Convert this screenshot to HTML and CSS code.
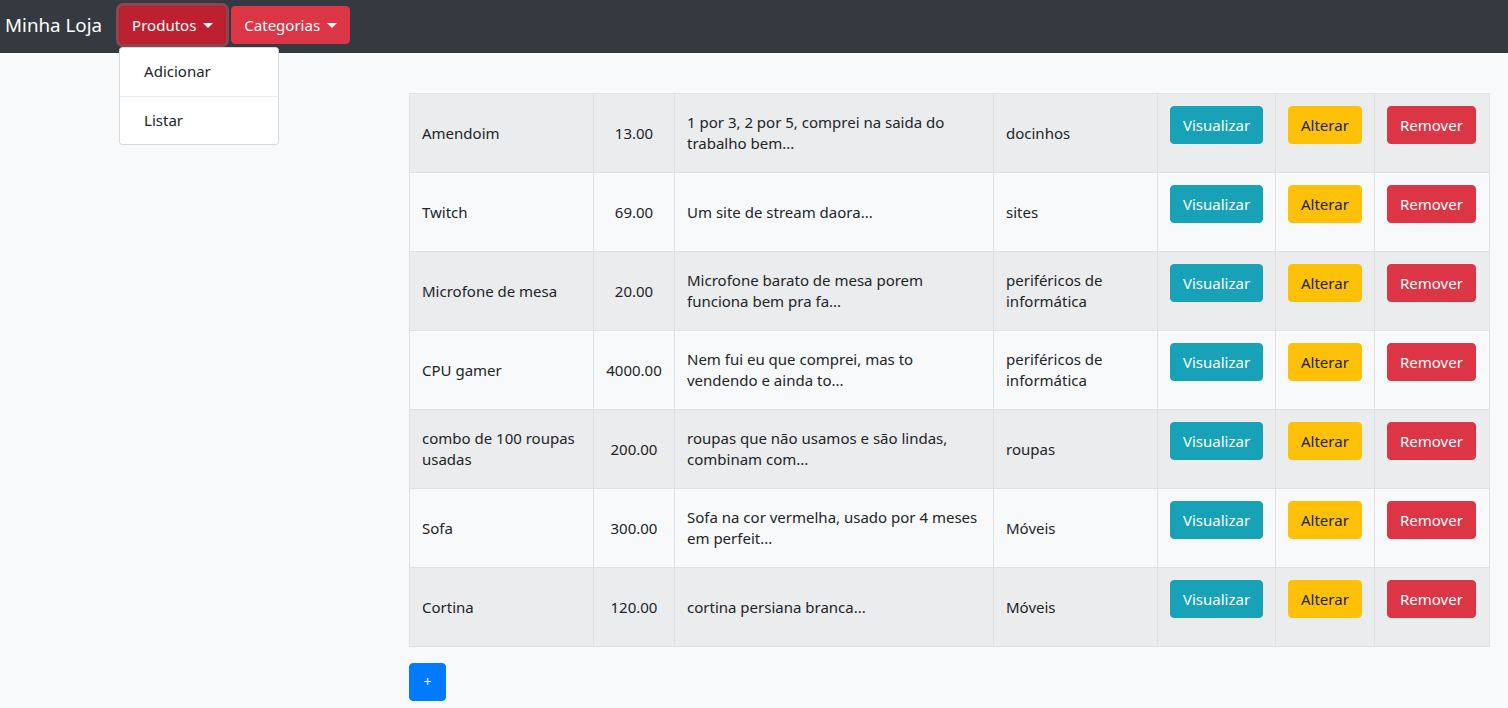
FILE: index.html
```html
<!DOCTYPE html>
<html lang="pt">
<head>
<meta charset="utf-8">
<title>Minha Loja</title>
<link rel="stylesheet" href="styles.css">
</head>
<body>
<nav class="navbar">
  <a class="brand" href="#">Minha Loja</a>
  <div class="menu-group">
    <div class="dropdown">
      <button class="btn btn-danger active toggle">Produtos</button>
      <div class="dropdown-menu">
        <a class="dropdown-item" href="#">Adicionar</a>
        <a class="dropdown-item" href="#">Listar</a>
      </div>
    </div>
    <div class="dropdown">
      <button class="btn btn-danger toggle">Categorias</button>
    </div>
  </div>
</nav>

<main class="main">
  <table class="table">
    <colgroup>
      <col class="c-name"><col class="c-price"><col class="c-desc"><col class="c-cat"><col class="c-v"><col class="c-a"><col class="c-r">
    </colgroup>
    <tbody>
      <tr>
        <td>Amendoim</td><td class="price">13.00</td><td>1 por 3, 2 por 5, comprei na saida do trabalho bem...</td><td>docinhos</td>
        <td class="act"><a class="btn btn-info" href="#">Visualizar</a></td><td class="act"><a class="btn btn-warning" href="#">Alterar</a></td><td class="act"><a class="btn btn-danger" href="#">Remover</a></td>
      </tr>
      <tr>
        <td>Twitch</td><td class="price">69.00</td><td>Um site de stream daora...</td><td>sites</td>
        <td class="act"><a class="btn btn-info" href="#">Visualizar</a></td><td class="act"><a class="btn btn-warning" href="#">Alterar</a></td><td class="act"><a class="btn btn-danger" href="#">Remover</a></td>
      </tr>
      <tr>
        <td>Microfone de mesa</td><td class="price">20.00</td><td>Microfone barato de mesa porem funciona bem pra fa...</td><td>periféricos de informática</td>
        <td class="act"><a class="btn btn-info" href="#">Visualizar</a></td><td class="act"><a class="btn btn-warning" href="#">Alterar</a></td><td class="act"><a class="btn btn-danger" href="#">Remover</a></td>
      </tr>
      <tr>
        <td>CPU gamer</td><td class="price">4000.00</td><td>Nem fui eu que comprei, mas to vendendo e ainda to...</td><td>periféricos de informática</td>
        <td class="act"><a class="btn btn-info" href="#">Visualizar</a></td><td class="act"><a class="btn btn-warning" href="#">Alterar</a></td><td class="act"><a class="btn btn-danger" href="#">Remover</a></td>
      </tr>
      <tr>
        <td>combo de 100 roupas usadas</td><td class="price">200.00</td><td>roupas que não usamos e são lindas, combinam com...</td><td>roupas</td>
        <td class="act"><a class="btn btn-info" href="#">Visualizar</a></td><td class="act"><a class="btn btn-warning" href="#">Alterar</a></td><td class="act"><a class="btn btn-danger" href="#">Remover</a></td>
      </tr>
      <tr>
        <td>Sofa</td><td class="price">300.00</td><td>Sofa na cor vermelha, usado por 4 meses em perfeit...</td><td>Móveis</td>
        <td class="act"><a class="btn btn-info" href="#">Visualizar</a></td><td class="act"><a class="btn btn-warning" href="#">Alterar</a></td><td class="act"><a class="btn btn-danger" href="#">Remover</a></td>
      </tr>
      <tr>
        <td>Cortina</td><td class="price">120.00</td><td>cortina persiana branca...</td><td>Móveis</td>
        <td class="act"><a class="btn btn-info" href="#">Visualizar</a></td><td class="act"><a class="btn btn-warning" href="#">Alterar</a></td><td class="act"><a class="btn btn-danger" href="#">Remover</a></td>
      </tr>
    </tbody>
  </table>
  <a class="btn btn-primary btn-add" href="#">+</a>
</main>
</body>
</html>
```

FILE: styles.css
```css
* { box-sizing: border-box; }

html, body {
  margin: 0;
  padding: 0;
}

body {
  background: #f8f9fa;
  color: #212529;
  font-family: "Noto Sans", "Open Sans", sans-serif;
  font-size: 15px;
  line-height: 24px;
  height: 708px;
  overflow: hidden;
}

a { text-decoration: none; }

.navbar {
  display: flex;
  align-items: flex-start;
  height: 53px;
  background: #343a40;
  padding: 6px 0 0 5px;
}

.brand {
  color: #fff;
  font-size: 18.8px;
  line-height: 38px;
  margin-right: 17px;
}

.menu-group {
  display: flex;
  gap: 5px;
}

.dropdown {
  position: relative;
}

.btn {
  display: inline-block;
  font-family: inherit;
  font-size: 15px;
  line-height: 24px;
  padding: 6px 12px;
  border: 1px solid transparent;
  border-radius: 4px;
  color: #fff;
  cursor: pointer;
  text-align: center;
  white-space: nowrap;
}

.btn-danger { background: #dc3545; border-color: #dc3545; }
.btn-danger.active {
  background: #bd2130;
  border-color: #b21f2d;
  box-shadow: 0 0 0 3px rgba(225, 83, 97, 0.5);
}
.btn-info { background: #17a2b8; border-color: #17a2b8; }
.btn-warning { background: #ffc107; border-color: #ffc107; color: #212529; }
.btn-primary { background: #007bff; border-color: #007bff; }

.toggle::after {
  content: "";
  display: inline-block;
  margin-left: 7px;
  vertical-align: 3px;
  border-top: 5px solid #fff;
  border-left: 5px solid transparent;
  border-right: 5px solid transparent;
}

.dropdown-menu {
  position: absolute;
  top: 41px;
  left: 0;
  width: 160px;
  background: #fff;
  border: 1px solid rgba(0, 0, 0, 0.15);
  border-radius: 4px;
  display: flex;
  flex-direction: column;
  z-index: 10;
}

.dropdown-item {
  display: block;
  height: 48px;
  line-height: 47px;
  padding: 0 24px;
  color: #212529;
}

.dropdown-item + .dropdown-item {
  border-top: 1px solid #e9ecef;
}

.main {
  padding: 40px 19px 0 409px;
}

.table {
  width: 1080px;
  border-collapse: collapse;
  table-layout: fixed;
  margin-bottom: 16px;
}

.c-name { width: 184px; }
.c-price { width: 81px; }
.c-desc { width: 319px; }
.c-cat { width: 164px; }
.c-v { width: 118px; }
.c-a { width: 99px; }
.c-r { width: 115px; }

.table td {
  border: 1px solid #dee2e6;
  padding: 12px;
  height: 79px;
  line-height: 21px;
  vertical-align: middle;
}

.table tr:nth-child(odd) td {
  background: rgba(0, 0, 0, 0.05);
}

.table td.price { text-align: center; }

.table td.act {
  vertical-align: top;
  white-space: nowrap;
}

.table td.act .btn { line-height: 24px; }

.btn-add {
  font-size: 14px;
  width: 37px;
  height: 38px;
  padding: 6px 0;
}
```
